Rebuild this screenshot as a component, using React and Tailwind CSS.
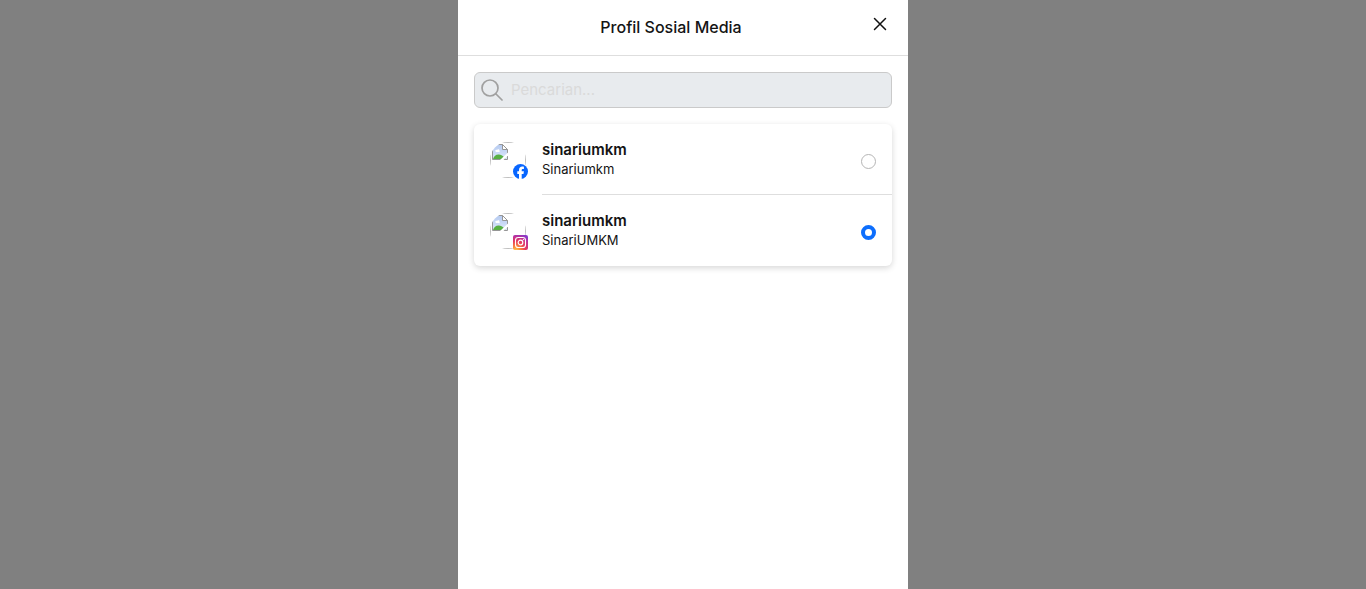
import { useState } from "react";

function MissingAvatar({ id }) {
  return (
    <div className="size-9 overflow-hidden rounded-full bg-white">
      <div className="size-9 border border-[#c0c0c0] p-px">
        <svg viewBox="0 0 16 16" className="block size-4" role="img" aria-label="Foto profil">
          <defs>
            <linearGradient id={id} x1="0" y1="0" x2="0" y2="1">
              <stop offset="0" stopColor="#b5caf0" />
              <stop offset="1" stopColor="#dde8fb" />
            </linearGradient>
          </defs>
          <path d="M.5 .5h10l5 5v10H.5z" fill={`url(#${id})`} />
          <path d="M3.500 7.500c-.8-1.200.6-2.200 1.500-1.500.8-1.200 2.600-.6 2.300.6.8.2.600 1.300-.2 1.300H4.200z" fill="#fff" />
          <path d="M1 15c.8-2.800 3.200-4.800 6-4.500 2.900.3 5.200 2 6.500 4.500z" fill="#58b043" />
          <path d="M.5 .5h10l5 5v10H.5z" fill="none" stroke="#969696" />
          <path d="M10.500 .5v5h5z" fill="#fff" stroke="#969696" />
          <path d="M8 16 16 8.500v3L11.500 16z" fill="#fff" />
        </svg>
      </div>
    </div>
  );
}

function FacebookBadge() {
  return (
    <svg viewBox="0 0 15 15" className="absolute -right-0.5 -bottom-px size-[15px]" aria-hidden="true">
      <circle cx="7.5" cy="7.5" r="7.5" fill="#0866ff" />
      <path
        d="M6 15V9.900H4.300V7.300H6V6.300c0-2.500 1.200-3.700 3.400-3.700.6 0 1.100.05 1.500.15v2.300H9.900c-.9 0-1.200.4-1.200 1.200v1.050h2.200l-.4 2.600H8.700V15z"
        fill="#fff"
      />
    </svg>
  );
}

function InstagramBadge() {
  return (
    <svg viewBox="0 0 15 15" className="absolute -right-0.5 -bottom-px size-[15px]" aria-hidden="true">
      <defs>
        <radialGradient id="ig" cx="0.2" cy="1.05" r="1.15">
          <stop offset="0" stopColor="#ffd04f" />
          <stop offset="0.25" stopColor="#fb8a3c" />
          <stop offset="0.55" stopColor="#e8395a" />
          <stop offset="0.8" stopColor="#c32f92" />
          <stop offset="1" stopColor="#8a3ac8" />
        </radialGradient>
      </defs>
      <rect width="15" height="15" rx="2" fill="url(#ig)" />
      <rect x="2.500" y="2.500" width="10" height="10" rx="2.800" fill="none" stroke="#fff" strokeWidth="1.100" />
      <circle cx="7.500" cy="7.500" r="2.300" fill="none" stroke="#fff" strokeWidth="1.200" />
      <circle cx="10.400" cy="4.600" r="0.700" fill="#fff" />
    </svg>
  );
}

const accounts = [
  { id: "facebook", handle: "sinariumkm", name: "Sinariumkm", Badge: FacebookBadge },
  { id: "instagram", handle: "sinariumkm", name: "SinariUMKM", Badge: InstagramBadge },
];

export default function App() {
  const [selected, setSelected] = useState("instagram");
  return (
    <div className="flex min-h-screen justify-center bg-[#808080] font-['Inter',sans-serif] text-[#141414]">
      <main className="w-full max-w-[450px] bg-white">
        <header className="flex h-14 items-start border-b border-[#dedede] px-4 py-3">
          <h1 className="flex-1 text-center text-base leading-[30px] font-medium">Profil Sosial Media</h1>
          <button type="button" aria-label="Tutup" className="flex size-6 items-center justify-center">
            <svg viewBox="0 0 12 12" className="size-3 overflow-visible" fill="none" stroke="#111" strokeWidth="1.500" strokeLinecap="round">
              <path d="M.5.5l11 11M11.500.5l-11 11" />
            </svg>
          </button>
        </header>

        <div className="flex flex-col gap-4 p-4">
          <label className="flex h-9 items-center gap-2 rounded-md border border-[#cacaca] bg-[#e8ebee] px-1.5">
            <svg viewBox="0 0 22 22" className="size-[22px] shrink-0" fill="none" stroke="#a0a0a0" strokeWidth="1.700" strokeLinecap="round">
              <circle cx="9" cy="9" r="8" />
              <path d="M15 15l6 6" />
            </svg>
            <input
              type="text"
              aria-label="Pencarian"
              placeholder="Pencarian..."
              className="min-w-0 flex-1 bg-transparent text-[15px] leading-6 outline-none placeholder:text-[#dadada]"
            />
          </label>

          <div className="rounded-md bg-white pl-4 shadow-[0_2px_6px_rgba(0,0,0,0.16)]">
            {accounts.map(({ id, handle, name, Badge }) => (
              <label key={id} className="group flex cursor-pointer items-center gap-4">
                <div className="relative shrink-0">
                  <MissingAvatar id={`sky-${id}`} />
                  <Badge />
                </div>
                <div className="flex flex-1 items-center justify-between border-b border-[#dedede] py-4 pr-4 group-last:border-transparent">
                  <div className="flex flex-col">
                    <span className="text-[15px] leading-5 font-semibold">{handle}</span>
                    <span className="text-[13px] leading-[18px]">{name}</span>
                  </div>
                  <input
                    type="radio"
                    name="account"
                    value={id}
                    checked={selected === id}
                    onChange={() => setSelected(id)}
                    className="mt-1 size-[15px] appearance-none rounded-full border border-[#b5b5b5] bg-white checked:border-4 checked:border-[#0d6efd]"
                  />
                </div>
              </label>
            ))}
          </div>
        </div>
      </main>
    </div>
  );
}
